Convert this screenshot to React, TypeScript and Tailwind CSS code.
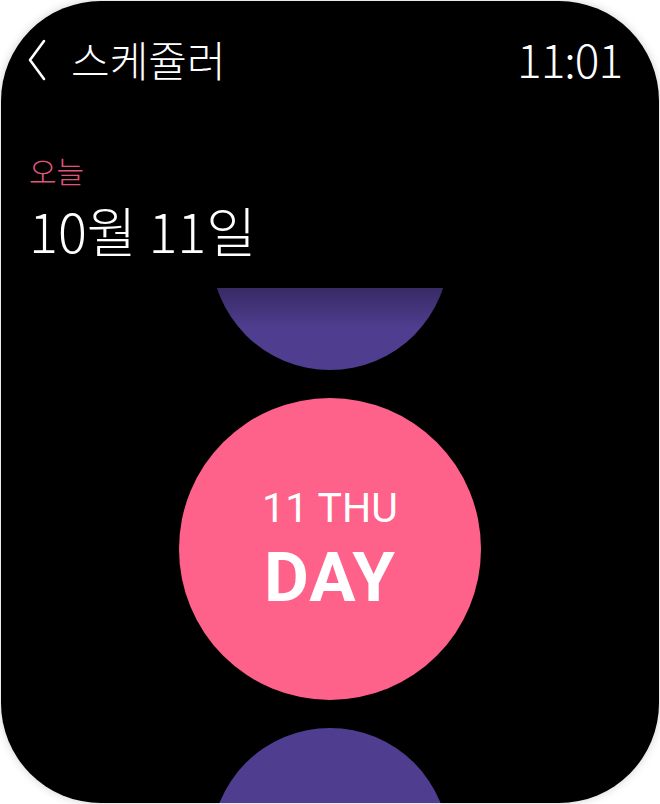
import React from "react";

const days = [
  { size: "w-[238px] h-[238px]", color: "bg-[#4f3d8f]" },
  { size: "w-[302px] h-[302px]", color: "bg-[#fe6189]", today: true },
  { size: "w-[238px] h-[238px]", color: "bg-[#4f3d8f]" },
];

const App = () => {
  return (
    <div className="w-[660px] h-[804px] bg-white p-px">
      <div
        className="relative flex h-[802px] w-[658px] flex-col overflow-hidden rounded-[100px] bg-black shadow-[0_0_10px_rgba(0,0,0,0.18)]"
        style={{ fontFamily: '"Noto Sans CJK KR", "Noto Sans", sans-serif' }}
      >
        {/* top bar */}
        <div className="mt-[18px] flex h-[62px] items-end justify-between pl-[26px] pr-[37px]">
          <div className="flex items-center gap-[24px]">
            <svg width="20" height="42" viewBox="0 0 20 42" className="mt-[2px]">
              <path
                d="M17 2 L3 21 L17 40"
                fill="none"
                stroke="#fff"
                strokeWidth="2.6"
                strokeLinecap="round"
                strokeLinejoin="round"
              />
            </svg>
            <span className="text-[42px] font-light leading-none text-white">스케쥴러</span>
          </div>
          <span className="text-[46px] font-light leading-none tracking-[-1px] text-white">11:01</span>
        </div>

        {/* date */}
        <div className="mt-[74px] pl-[28px]">
          <div className="text-[30px] font-light leading-none text-[#e0567b]">오늘</div>
          <div className="mt-[18px] text-[54px] font-light leading-none text-white">10월 11일</div>
        </div>

        {/* day list */}
        <div className="relative mt-[31px] flex-1 overflow-hidden">
          <div className="-mt-[156px] flex flex-col items-center gap-[28px]">
            {days.map((d, i) => (
              <div
                key={i}
                className={`${d.size} ${d.color} flex shrink-0 flex-col items-center justify-center rounded-full text-white`}
                style={{ fontFamily: 'Roboto, "Noto Sans", sans-serif' }}
              >
                {d.today && (
                  <>
                    <span className="mt-[2px] text-[41px] leading-none">11 THU</span>
                    <span className="mt-[14px] text-[69px] font-bold leading-none tracking-[1px]">DAY</span>
                  </>
                )}
              </div>
            ))}
          </div>
          <div className="pointer-events-none absolute inset-x-0 top-0 h-[40px] bg-gradient-to-b from-black/30 to-transparent" />
        </div>
      </div>
    </div>
  );
};

export default App;
